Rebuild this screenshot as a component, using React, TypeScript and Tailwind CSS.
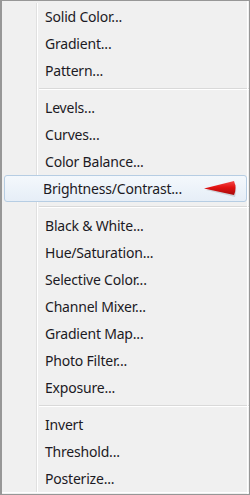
const groups: string[][] = [
  ["Solid Color...", "Gradient...", "Pattern..."],
  ["Levels...", "Curves...", "Color Balance...", "Brightness/Contrast..."],
  [
    "Black & White...",
    "Hue/Saturation...",
    "Selective Color...",
    "Channel Mixer...",
    "Gradient Map...",
    "Photo Filter...",
    "Exposure...",
  ],
  ["Invert", "Threshold...", "Posterize..."],
]

const HIGHLIGHT = "Brightness/Contrast..."

function Arrow() {
  return (
    <svg width="38" height="20" viewBox="0 0 38 20" className="absolute right-[6px] top-[2px]">
      <defs>
        <linearGradient id="ar" x1="0" y1="0" x2="0" y2="1">
          <stop offset="0" stopColor="#f24a4a" />
          <stop offset="0.45" stopColor="#e21212" />
          <stop offset="1" stopColor="#a60a0a" />
        </linearGradient>
      </defs>
      <path d="M4 12 L34 7 Q35 13 33 19 Z" fill="#000" opacity="0.12" />
      <path d="M2 10.5 L32 3 Q35 10 32 17 Z" fill="url(#ar)" />
    </svg>
  )
}

function Item({ label }: { label: string }) {
  const active = label === HIGHLIGHT
  if (active) {
    return (
      <div className="relative h-[27px] px-[2px] py-0">
        <div className="relative h-full flex items-center rounded-[3px] border border-[#b6cde3] bg-gradient-to-b from-[#f4f8fc] to-[#e6eef7] pl-[38px]">
          <span>{label}</span>
          <Arrow />
        </div>
      </div>
    )
  }
  return (
    <div className="h-[27px] flex items-center pl-[43px]">
      <span>{label}</span>
    </div>
  )
}

function Separator() {
  return (
    <div className="h-[10px] flex flex-col justify-center pl-[37px]">
      <div className="h-px bg-[#d9d9d9]" />
      <div className="h-px bg-white" />
    </div>
  )
}

export default function App() {
  return (
    <div className="w-[250px] h-[495px] bg-white">
      <div
        className="relative w-full h-full border border-[#979797] border-l-2 bg-[#f0f0f0] py-[2px] text-[14px] tracking-[-0.2px] text-[#1c1a24]"
        style={{ fontFamily: '"Noto Sans", "Open Sans", sans-serif' }}
      >
        <div className="absolute left-[34px] top-[2px] bottom-[2px] w-[2px] flex">
          <div className="w-px bg-[#e0e0e0]" />
          <div className="w-px bg-white" />
        </div>
        <div className="relative">
          {groups.map((g, i) => (
            <div key={i}>
              {i > 0 && <Separator />}
              {g.map((label) => (
                <Item key={label} label={label} />
              ))}
            </div>
          ))}
        </div>
        <div className="absolute right-[1px] top-0 bottom-0 w-px bg-white" />
        <div className="absolute left-0 right-0 bottom-[1px] h-px bg-white" />
      </div>
    </div>
  )
}
